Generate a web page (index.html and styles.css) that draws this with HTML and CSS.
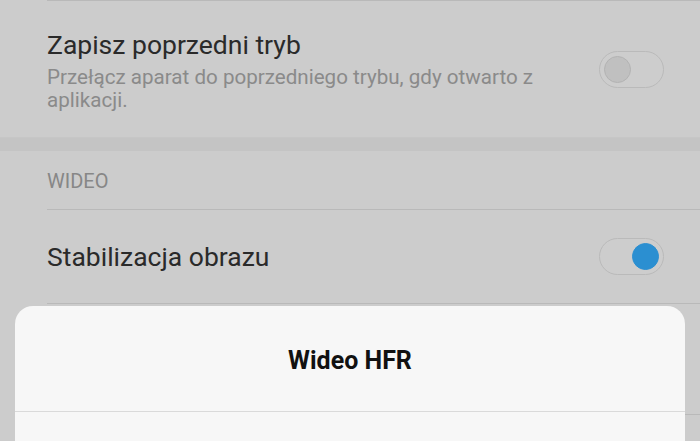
FILE: index.html
```html
<!DOCTYPE html>
<html lang="pl">
<head>
<meta charset="utf-8">
<title>Ustawienia aparatu</title>
<link rel="stylesheet" href="styles.css">
</head>
<body>
<div class="screen">
  <div class="list">
    <div class="group">
      <div class="row row-desc">
        <div class="row-text">
          <div class="row-title">Zapisz poprzedni tryb</div>
          <div class="row-sub">Przełącz aparat do poprzedniego trybu, gdy otwarto z aplikacji.</div>
        </div>
        <div class="toggle"><span class="knob"></span></div>
      </div>
    </div>
    <div class="gap"></div>
    <div class="group">
      <div class="section-head">WIDEO</div>
      <div class="row row-single">
        <div class="row-text">
          <div class="row-title">Stabilizacja obrazu</div>
        </div>
        <div class="toggle toggle-on"><span class="knob"></span></div>
      </div>
      <div class="row row-single row-tall">
        <div class="row-text">
          <div class="row-title">Wideo HFR</div>
        </div>
      </div>
    </div>
  </div>
  <div class="dialog">
    <div class="dialog-head">Wideo HFR</div>
    <div class="dialog-body"></div>
  </div>
</div>
</body>
</html>
```

FILE: styles.css
```css
* { box-sizing: border-box; }
html, body { margin: 0; padding: 0; }
body {
  width: 700px;
  height: 441px;
  overflow: hidden;
  background: #cccccc;
  font-family: Roboto, "Noto Sans", sans-serif;
}
.screen {
  position: relative;
  width: 700px;
  height: 441px;
  overflow: hidden;
}
.list {
  display: flex;
  flex-direction: column;
}
.group {
  background: #cccccc;
  padding-left: 47px;
}
.gap {
  height: 14px;
  background: #c4c4c4;
  border-top: 1px solid #c6c6c6;
}
.row {
  display: flex;
  align-items: center;
  padding-right: 36px;
  border-bottom: 1px solid #b9b9b9;
}
.row-desc {
  border-top: 1px solid #b9b9b9;
  border-bottom: none;
  padding-top: 29px;
  padding-bottom: 25px;
  align-items: flex-start;
}
.row-desc .toggle { margin-top: 21px; }
.row-text {
  flex: 1;
  padding-right: 24px;
}
.row-title {
  font-size: 26.5px;
  line-height: 30px;
  color: #2a2a2a;
}
.row-sub {
  margin-top: 6px;
  font-size: 20.6px;
  line-height: 23px;
  color: #8a8a8a;
}
.section-head {
  height: 59px;
  display: flex;
  align-items: center;
  font-size: 20px;
  color: #878787;
  border-bottom: 1px solid #b9b9b9;
  padding-top: 2px;
}
.row-single { height: 94px; }
.row-tall { height: 111px; }
.toggle {
  width: 65px;
  height: 37px;
  border-radius: 19px;
  border: 1.5px solid #bababa;
  background: #cdcdcd;
  display: flex;
  align-items: center;
  padding: 0 4px;
  flex: none;
}
.knob {
  width: 27px;
  height: 27px;
  border-radius: 50%;
  background: #c0c0c0;
  border: 1px solid #b3b3b3;
}
.toggle-on { justify-content: flex-end; }
.toggle-on .knob {
  background: #2b8fd1;
  border-color: #2b8fd1;
}
.dialog {
  position: absolute;
  left: 15px;
  top: 306px;
  width: 670px;
  height: 220px;
  background: #f7f7f7;
  border-radius: 18px 18px 0 0;
}
.dialog-head {
  height: 106px;
  display: flex;
  align-items: center;
  justify-content: center;
  font-size: 25px;
  font-weight: 700;
  color: #111111;
  border-bottom: 1px solid #dadada;
  padding-top: 4px;
}
```
